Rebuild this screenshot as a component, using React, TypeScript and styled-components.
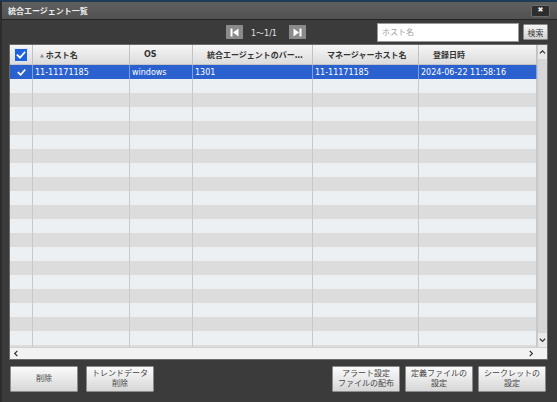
import React from "react";
import styled, { createGlobalStyle } from "styled-components";

const Global = createGlobalStyle`
  html, body { margin: 0; padding: 0; background: #3a3a3a; }
  body {
    width: 557px; height: 402px; overflow: hidden;
    font-family: "DejaVu Sans", "Noto Sans CJK JP", sans-serif;
    font-size: 8px;
  }
  * { box-sizing: border-box; }
`;

const Window = styled.div`
  width: 557px;
  height: 402px;
  display: flex;
  flex-direction: column;
  background: #3b3b3b;
  border-top: 2px solid #1f3b55;
  border-left: 2px solid #2c2c2c;
`;

const TitleBar = styled.div`
  height: 18px;
  flex: none;
  display: flex;
  align-items: center;
  justify-content: space-between;
  padding: 0 7px 0 6px;
  background: linear-gradient(#5f5f5f, #525252);
  border-bottom: 1px solid #242424;
  color: #ededed;
  font-size: 8px;
  font-weight: bold;
`;

const CloseButton = styled.div`
  width: 19px;
  height: 12px;
  display: flex;
  align-items: center;
  justify-content: center;
  background: #2d2d2d;
  border: 1px solid #6c6c6c;
  border-radius: 2px;
  color: #f2f2f2;
  font-size: 7px;
  font-weight: bold;
  line-height: 1;
`;

const Toolbar = styled.div`
  height: 24px;
  flex: none;
  display: flex;
  align-items: center;
  padding: 0 9px 0 224px;
`;

const PagerIcon = styled.div`
  width: 17px;
  height: 14px;
  background: #8b8b8b;
  display: flex;
  align-items: center;
  justify-content: center;
`;

const PagerText = styled.span`
  color: #e2e2e2;
  font-size: 8px;
  margin: 0 12px 0 8px;
`;

const SearchGroup = styled.div`
  margin-left: auto;
  display: flex;
  align-items: center;
  gap: 4px;
`;

const SearchInput = styled.input`
  width: 142px;
  height: 19px;
  border: 1px solid #9a9a9a;
  background: #fff;
  padding: 0 4px;
  font-family: inherit;
  font-size: 8px;
  color: #333;
  outline: none;
  &::placeholder { color: #9c9c9c; }
`;

const SmallButton = styled.div`
  width: 25px;
  height: 16px;
  display: flex;
  align-items: center;
  justify-content: center;
  border: 1px solid #8a8a8a;
  border-radius: 1px;
  background: linear-gradient(#f6f6f6, #d2d2d2);
  color: #3c3c3c;
  font-size: 8px;
`;

const TableFrame = styled.div`
  margin: 0 9px 0 7px;
  height: 316px;
  flex: none;
  border: 1px solid #6a6a6a;
  background: #edf0f2;
  display: grid;
  grid-template-columns: 527px 10px;
  grid-template-rows: 1fr 12px;
  overflow: hidden;
`;

const DataArea = styled.div`
  overflow: hidden;
  display: flex;
  flex-direction: column;
`;

const COLS = "23px 97px 63px 120px 106px 118px";

const HeaderRow = styled.div`
  height: 20px;
  flex: none;
  display: grid;
  grid-template-columns: ${COLS};
  background: linear-gradient(#f6f6f6, #dcdcdc);
  border-bottom: 1px solid #c4c4c4;
`;

const HeaderCell = styled.div<{ $center?: boolean; $pad?: number }>`
  display: flex;
  align-items: center;
  justify-content: ${(p) => (p.$center ? "center" : "flex-start")};
  padding-left: ${(p) => (p.$center ? 0 : p.$pad ?? 14)}px;
  border-right: 1px solid #c2c2c2;
  color: #333;
  font-weight: bold;
  font-size: 8px;
  white-space: nowrap;
  overflow: hidden;
`;

const SortMark = styled.span`
  color: #8d8d8d;
  font-size: 5px;
  margin-right: 2px;
`;

const Row = styled.div<{ $selected?: boolean; $alt?: boolean }>`
  height: 14px;
  flex: none;
  display: grid;
  grid-template-columns: ${COLS};
  background: ${(p) => (p.$selected ? "#2b60cf" : p.$alt ? "#dcdcdc" : "#edf0f2")};
  color: ${(p) => (p.$selected ? "#ffffff" : "#222")};
`;

const Cell = styled.div<{ $selected?: boolean; $center?: boolean }>`
  display: flex;
  align-items: center;
  justify-content: ${(p) => (p.$center ? "center" : "flex-start")};
  padding-left: ${(p) => (p.$center ? 0 : 2)}px;
  border-right: 1px solid ${(p) => (p.$selected ? "#7f9fe2" : "#c9c9c9")};
  font-size: 8px;
  white-space: nowrap;
  overflow: hidden;
`;

const CheckBox = styled.div`
  width: 14px;
  height: 14px;
  background: #1d62da;
  border: 1px solid #dfe8f8;
  border-radius: 1px;
  display: flex;
  align-items: center;
  justify-content: center;
`;

const VScroll = styled.div`
  display: flex;
  flex-direction: column;
  justify-content: space-between;
  background: #d6d6d6;
  border-left: 1px solid #c8c8c8;
`;

const ScrollArrowBox = styled.div`
  height: 14px;
  display: flex;
  align-items: center;
  justify-content: center;
  background: #e9e9e9;
`;

const HScroll = styled.div`
  display: flex;
  align-items: center;
  justify-content: space-between;
  padding: 0 2px 0 3px;
  background: #f2f2f2;
  border-top: 1px solid #d0d0d0;
`;

const Corner = styled.div`
  background: #f2f2f2;
  border-top: 1px solid #d0d0d0;
`;

const ButtonBar = styled.div`
  display: flex;
  align-items: center;
  padding: 6px 11px 0 8px;
`;

const ButtonGroup = styled.div<{ $gap: number; $push?: boolean }>`
  display: flex;
  gap: ${(p) => p.$gap}px;
  margin-left: ${(p) => (p.$push ? "auto" : "0")};
`;

const ActionButton = styled.div`
  width: 68px;
  height: 26px;
  display: flex;
  align-items: center;
  justify-content: center;
  text-align: center;
  border: 1px solid #8c8c8c;
  border-radius: 1px;
  background: linear-gradient(#fbfbfb, #d6d6d6);
  color: #444;
  font-size: 8px;
  line-height: 10px;
`;

const Check = ({ size = 10 }: { size?: number }) => (
  <svg width={size} height={size} viewBox="0 0 10 10">
    <path d="M1.5 5.2 L4 7.6 L8.6 2.4" fill="none" stroke="#fff" strokeWidth="1.8" strokeLinecap="square" />
  </svg>
);

const Chevron = ({ dir }: { dir: "up" | "down" | "left" | "right" }) => {
  const d =
    dir === "up"
      ? "M1 5 L4 2 L7 5"
      : dir === "down"
      ? "M1 2 L4 5 L7 2"
      : dir === "left"
      ? "M5 1 L2 4 L5 7"
      : "M2 1 L5 4 L2 7";
  return (
    <svg width="7" height="7" viewBox="0 0 8 8">
      <path d={d} fill="none" stroke="#333" strokeWidth="1.4" />
    </svg>
  );
};

const FirstIcon = () => (
  <svg width="9" height="9" viewBox="0 0 9 9">
    <rect x="0.5" y="0.5" width="2" height="8" fill="#fff" />
    <path d="M8.5 0.5 L3 4.5 L8.5 8.5 Z" fill="#fff" />
  </svg>
);

const LastIcon = () => (
  <svg width="9" height="9" viewBox="0 0 9 9">
    <path d="M0.5 0.5 L6 4.5 L0.5 8.5 Z" fill="#fff" />
    <rect x="6.5" y="0.5" width="2" height="8" fill="#fff" />
  </svg>
);

const ROW_COUNT = 21;

export default function App() {
  const rows = Array.from({ length: ROW_COUNT }, (_, i) => i);
  return (
    <>
      <Global />
      <Window>
        <TitleBar>
          <span>統合エージェント一覧</span>
          <CloseButton>✖</CloseButton>
        </TitleBar>
        <Toolbar>
          <PagerIcon>
            <FirstIcon />
          </PagerIcon>
          <PagerText>1〜1/1</PagerText>
          <PagerIcon>
            <LastIcon />
          </PagerIcon>
          <SearchGroup>
            <SearchInput placeholder="ホスト名" />
            <SmallButton>検索</SmallButton>
          </SearchGroup>
        </Toolbar>
        <TableFrame>
          <DataArea>
            <HeaderRow>
              <HeaderCell $center>
                <CheckBox>
                  <Check />
                </CheckBox>
              </HeaderCell>
              <HeaderCell $pad={7}>
                <SortMark>▲</SortMark>ホスト名
              </HeaderCell>
              <HeaderCell>OS</HeaderCell>
              <HeaderCell>統合エージェントのバー…</HeaderCell>
              <HeaderCell>マネージャーホスト名</HeaderCell>
              <HeaderCell>登録日時</HeaderCell>
            </HeaderRow>
            {rows.map((i) =>
              i === 0 ? (
                <Row key={i} $selected>
                  <Cell $selected $center>
                    <Check size={9} />
                  </Cell>
                  <Cell $selected>11-11171185</Cell>
                  <Cell $selected>windows</Cell>
                  <Cell $selected>1301</Cell>
                  <Cell $selected>11-11171185</Cell>
                  <Cell $selected>2024-06-22 11:58:16</Cell>
                </Row>
              ) : (
                <Row key={i} $alt={i % 2 === 0}>
                  <Cell />
                  <Cell />
                  <Cell />
                  <Cell />
                  <Cell />
                  <Cell />
                </Row>
              )
            )}
          </DataArea>
          <VScroll>
            <ScrollArrowBox>
              <Chevron dir="up" />
            </ScrollArrowBox>
            <ScrollArrowBox>
              <Chevron dir="down" />
            </ScrollArrowBox>
          </VScroll>
          <HScroll>
            <Chevron dir="left" />
            <Chevron dir="right" />
          </HScroll>
          <Corner />
        </TableFrame>
        <ButtonBar>
          <ButtonGroup $gap={8}>
            <ActionButton>削除</ActionButton>
            <ActionButton>
              トレンドデータ
              <br />
              削除
            </ActionButton>
          </ButtonGroup>
          <ButtonGroup $gap={5} $push>
            <ActionButton>
              アラート設定
              <br />
              ファイルの配布
            </ActionButton>
            <ActionButton>
              定義ファイルの
              <br />
              設定
            </ActionButton>
            <ActionButton>
              シークレットの
              <br />
              設定
            </ActionButton>
          </ButtonGroup>
        </ButtonBar>
      </Window>
    </>
  );
}
